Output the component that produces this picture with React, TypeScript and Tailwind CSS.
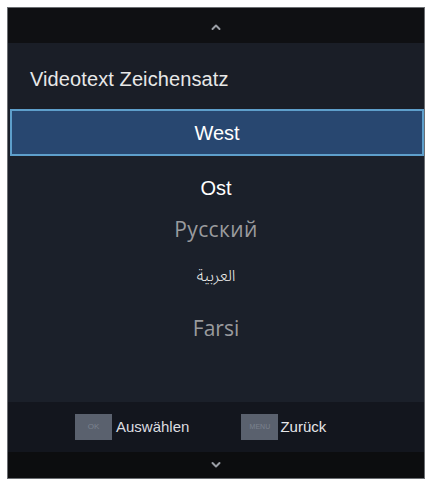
import React from "react";

const Chevron = ({ up }: { up?: boolean }) => (
  <svg width="12" height="8" viewBox="0 0 12 8" className="block">
    <polyline
      points={up ? "2.5,6 6,2.5 9.5,6" : "2.5,2 6,5.5 9.5,2"}
      fill="none"
      stroke="#9a9ea5"
      strokeWidth="2"
      strokeLinecap="round"
      strokeLinejoin="round"
    />
  </svg>
);

export default function App() {
  return (
    <div className="w-[432px] h-[482px] bg-white pt-[7px] pl-[7px]" style={{ fontFamily: '"Liberation Sans", Arial, sans-serif' }}>
      <div className="w-[418px] h-[472px] flex flex-col bg-[#1b202a] border border-[#6b6e72] overflow-hidden">
        <div className="h-[35px] bg-[#0f1013] flex items-center justify-center pt-[2px]">
          <Chevron up />
        </div>
        <div className="h-[66px] bg-[#1a1e27] flex items-center pl-[22px] pt-[6px]">
          <span className="text-[20px] text-[#e8e8e8] tracking-[0.1px]">Videotext Zeichensatz</span>
        </div>
        <div className="h-[47px] ml-[2px] border-2 border-[#5e9fcb] bg-[#284770] flex items-center justify-center">
          <span className="text-[20px] text-white">West</span>
        </div>
        <div className="h-[246px] flex flex-col items-center pt-[14px]">
          <div className="h-[36px] flex items-center text-[20px] text-white">Ost</div>
          <div className="h-[48px] flex items-center text-[21px] text-[#9a9b9e] tracking-[0.4px]" style={{ fontFamily: '"Open Sans", sans-serif' }}>Русский</div>
          <div className="h-[44px] flex items-center text-[16px] font-light text-[#f0f0f0]" style={{ fontFamily: '"Noto Sans Arabic", "DejaVu Sans", sans-serif' }} dir="rtl">العربية</div>
          <div className="h-[62px] flex items-center text-[21px] text-[#9a9b9e]" style={{ fontFamily: '"Open Sans", sans-serif' }}>Farsi</div>
        </div>
        <div className="h-[50px] bg-[#13161e] flex items-center pl-[67px]">
          <div className="w-[37px] h-[26px] bg-[#5a616e] flex items-center justify-center text-[8px] text-[#7b828f]">OK</div>
          <span className="ml-[4px] text-[15px] text-[#dcdde0]">Auswählen</span>
          <div className="ml-[52px] w-[37px] h-[26px] bg-[#5a616e] flex items-center justify-center text-[7px] text-[#7b828f]">MENU</div>
          <span className="ml-[2px] text-[15px] text-[#e6e7ea]">Zurück</span>
        </div>
        <div className="flex-1 bg-[#0c0d0f] flex items-center justify-center">
          <Chevron />
        </div>
      </div>
    </div>
  );
}
